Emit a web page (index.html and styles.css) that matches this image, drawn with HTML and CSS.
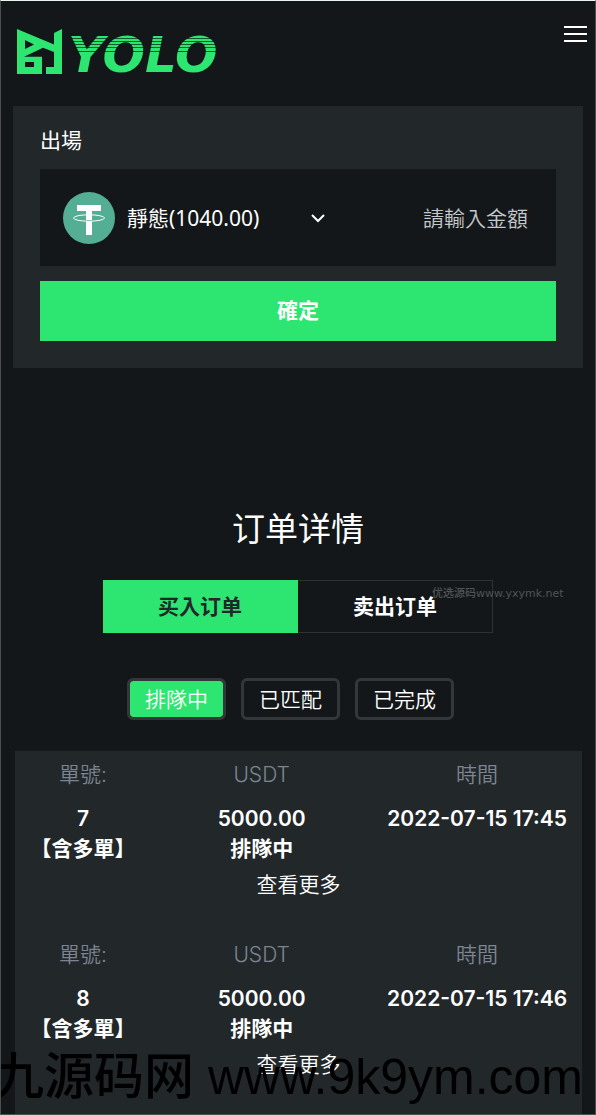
FILE: index.html
```html
<!DOCTYPE html>
<html lang="zh-Hant">
<head>
  <meta charset="UTF-8" />
  <meta name="viewport" content="width=device-width, initial-scale=1" />
  <title>YOLO</title>
  <link rel="stylesheet" href="styles.css">
</head>
<body>
  <div class="page">
    <header class="header">
      <a class="logo" href="#">
        <svg class="logo-mark" viewBox="0 0 45 45" aria-hidden="true">
          <path fill-rule="evenodd" d="M0 0 L37 15.500 V4 L45 0 V45 H29 V38 H37 V23 L26 18.700 L7 27.700 H25 V45 H0 Z M8 11 V20 L17 15.500 Z M8 33 V38 H17 V33 Z" />
        </svg>
        <span class="logo-text">YOLO</span>
      </a>
      <button class="menu-btn" type="button" aria-label="Menu">
        <span></span><span></span><span></span>
      </button>
    </header>

    <form class="card">
      <label class="card-label" for="amount">出場</label>
      <div class="field">
        <svg class="coin" viewBox="0 0 52 52" aria-hidden="true">
          <circle cx="26" cy="26" r="26" fill="#53ae94" />
          <ellipse cx="26" cy="26" rx="15.500" ry="3.200" fill="none" stroke="#fff" stroke-width="1" />
          <path fill="#fff" d="M14 13 H38 V19 H29 V28 H23 V19 H14 Z M23 29 H29 V43 H23 Z" />
        </svg>
        <select class="wallet" aria-label="錢包">
          <option>靜態(1040.00)</option>
        </select>
        <input class="amount" id="amount" type="text" placeholder="請輸入金額">
      </div>
      <button class="submit" type="button">確定</button>
    </form>

    <main class="orders">
      <h1>订单详情</h1>
      <div class="tabs">
        <button class="tab active" type="button">买入订单</button>
        <button class="tab" type="button">卖出订单</button>
        <span class="mark-small">优选源码www.yxymk.net</span>
      </div>
      <div class="filters">
        <button class="filter active" type="button">排隊中</button>
        <button class="filter" type="button">已匹配</button>
        <button class="filter" type="button">已完成</button>
      </div>

      <div class="list">
        <section class="order">
          <table>
            <thead>
              <tr><th class="col-id">單號:</th><th class="col-sum">USDT</th><th class="col-time">時間</th></tr>
            </thead>
            <tbody>
              <tr><td>7<br>【含多單】</td><td>5000.00<br>排隊中</td><td>2022-07-15 17:45</td></tr>
            </tbody>
          </table>
          <a class="more" href="#">查看更多</a>
        </section>
        <section class="order">
          <table>
            <thead>
              <tr><th class="col-id">單號:</th><th class="col-sum">USDT</th><th class="col-time">時間</th></tr>
            </thead>
            <tbody>
              <tr><td>8<br>【含多單】</td><td>5000.00<br>排隊中</td><td>2022-07-15 17:46</td></tr>
            </tbody>
          </table>
          <a class="more" href="#">查看更多</a>
        </section>
      </div>
    </main>
    <div class="mark-large">九源码网 www.9k9ym.com</div>
  </div>
</body>
</html>
```
FILE: styles.css
```css
* {
  box-sizing: border-box;
}
body {
  margin: 0;
  background: #131719;
  color: #fff;
  font-family: Inter, "Noto Sans CJK TC", sans-serif;
  font-size: 21px;
  line-height: 30px;
}
button,
select,
input {
  font: inherit;
  color: inherit;
  border: none;
  border-radius: 0;
  background: none;
  padding: 0;
}
.page {
  position: relative;
  min-height: 100vh;
  overflow: hidden;
  border: 1px solid #4b4f50;
  border-top-color: #e9f5f0;
}
.header {
  display: flex;
  justify-content: space-between;
  align-items: flex-start;
  height: 105px;
  padding: 20px 8px 0 16px;
}
.logo {
  display: flex;
  align-items: center;
  gap: 6px;
  text-decoration: none;
}
.logo-mark {
  width: 45px;
  height: 45px;
  fill: #2de571;
}
.logo-text {
  font-family: "DejaVu Sans", sans-serif;
  font-size: 50px;
  font-weight: 700;
  font-style: italic;
  line-height: 52px;
  padding-top: 8px;
  padding-right: 6px;
  color: transparent;
  background: linear-gradient(
    #2de571 17px, #14582f 17px, #14582f 18px,
    #2de571 18px, #2de571 20px, #14582f 20px, #14582f 21px,
    #2de571 21px, #2de571 23px, #14582f 23px, #14582f 24px,
    #2de571 24px, #2de571 26px, #14582f 26px, #14582f 27px,
    #2de571 27px, #2de571 30px, #14582f 30px, #14582f 31px,
    #2de571 31px);
  -webkit-background-clip: text;
  background-clip: text;
}
.menu-btn {
  display: flex;
  flex-direction: column;
  gap: 5px;
  width: 23px;
  padding-top: 5px;
  cursor: pointer;
}
.menu-btn span {
  height: 2px;
  background: #fff;
}
.card {
  margin: 0 12px;
  padding: 20px 27px 27px;
  background: #22272a;
}
.card-label {
  display: block;
  margin-bottom: 13px;
}
.field {
  display: flex;
  align-items: center;
  height: 97px;
  margin-bottom: 15px;
  padding: 0 28px 0 23px;
  background: #131719;
}
.coin {
  flex: none;
  width: 52px;
  height: 52px;
  margin-right: 12px;
}
.wallet {
  flex: none;
  width: 199px;
  height: 40px;
  appearance: none;
  font-family: "Noto Sans", "Noto Sans CJK TC", sans-serif;
  background: url("data:image/svg+xml,%3Csvg xmlns='http://www.w3.org/2000/svg' width='16' height='10' viewBox='0 0 16 10'%3E%3Cpath d='M2 2 L8 8 L14 2' fill='none' stroke='%23fff' stroke-width='2'/%3E%3C/svg%3E") no-repeat right center;
}
.amount {
  flex: 1;
  min-width: 0;
  height: 42px;
  padding-top: 2px;
  text-align: right;
  outline: none;
}
.amount::placeholder {
  color: #c4c8cb;
  font-weight: 350;
}
.submit {
  display: block;
  width: 100%;
  height: 60px;
  background: #2de571;
  font-weight: 700;
  cursor: pointer;
}
.orders {
  padding-top: 134px;
}
h1 {
  margin: 0 0 28px;
  font-family: "Noto Sans CJK SC", sans-serif;
  font-size: 33px;
  font-weight: 400;
  line-height: 50px;
  text-align: center;
}
.tabs {
  position: relative;
  display: flex;
  width: 390px;
  max-width: 100%;
  margin: 0 auto 45px;
}
.tab {
  flex: 1;
  height: 53px;
  padding-bottom: 3px;
  border: 1px solid #2e3235;
  border-left: none;
  font-family: "Noto Sans CJK SC", sans-serif;
  font-weight: 700;
  cursor: pointer;
}
.tab.active {
  background: #2de571;
  border-color: #2de571;
  color: #22272a;
}
.mark-small {
  position: absolute;
  top: 6px;
  left: 329px;
  color: #505456;
  font-family: "DejaVu Sans", "Noto Sans CJK SC", sans-serif;
  font-size: 11px;
  font-weight: 500;
  line-height: 16px;
  white-space: nowrap;
  pointer-events: none;
}
.filters {
  display: flex;
  justify-content: center;
  gap: 15px;
  padding-right: 15px;
  margin-bottom: 31px;
}
.filter {
  width: 99px;
  height: 42px;
  padding-top: 2px;
  border: 3px solid #33373a;
  border-radius: 6px;
  font-weight: 350;
  cursor: pointer;
}
.filter.active {
  background: #2de571;
  background-clip: padding-box;
}
.list {
  margin: 0 13px 0 14px;
  background: #22272a;
}
.order {
  height: 180px;
  padding-top: 9px;
  text-align: center;
}
.order:last-child {
  height: 183px;
}
table {
  width: 100%;
  table-layout: fixed;
  border-collapse: collapse;
}
th,
td {
  padding: 0;
  vertical-align: top;
  white-space: nowrap;
}
th {
  padding-bottom: 14px;
  color: #7c8491;
  font-weight: 350;
}
td {
  font-weight: 600;
}
.col-id {
  width: 24%;
}
.col-sum {
  width: 39%;
}
.col-time {
  width: 37%;
}
.more {
  display: inline-block;
  margin-top: 6px;
  color: #fff;
  font-weight: 350;
  text-decoration: none;
}
.mark-large {
  position: absolute;
  right: 12px;
  bottom: 7px;
  color: #000;
  font-family: "Liberation Sans", "Noto Sans CJK SC", sans-serif;
  font-size: 50px;
  font-weight: 500;
  line-height: 60px;
  white-space: nowrap;
  pointer-events: none;
}
```
